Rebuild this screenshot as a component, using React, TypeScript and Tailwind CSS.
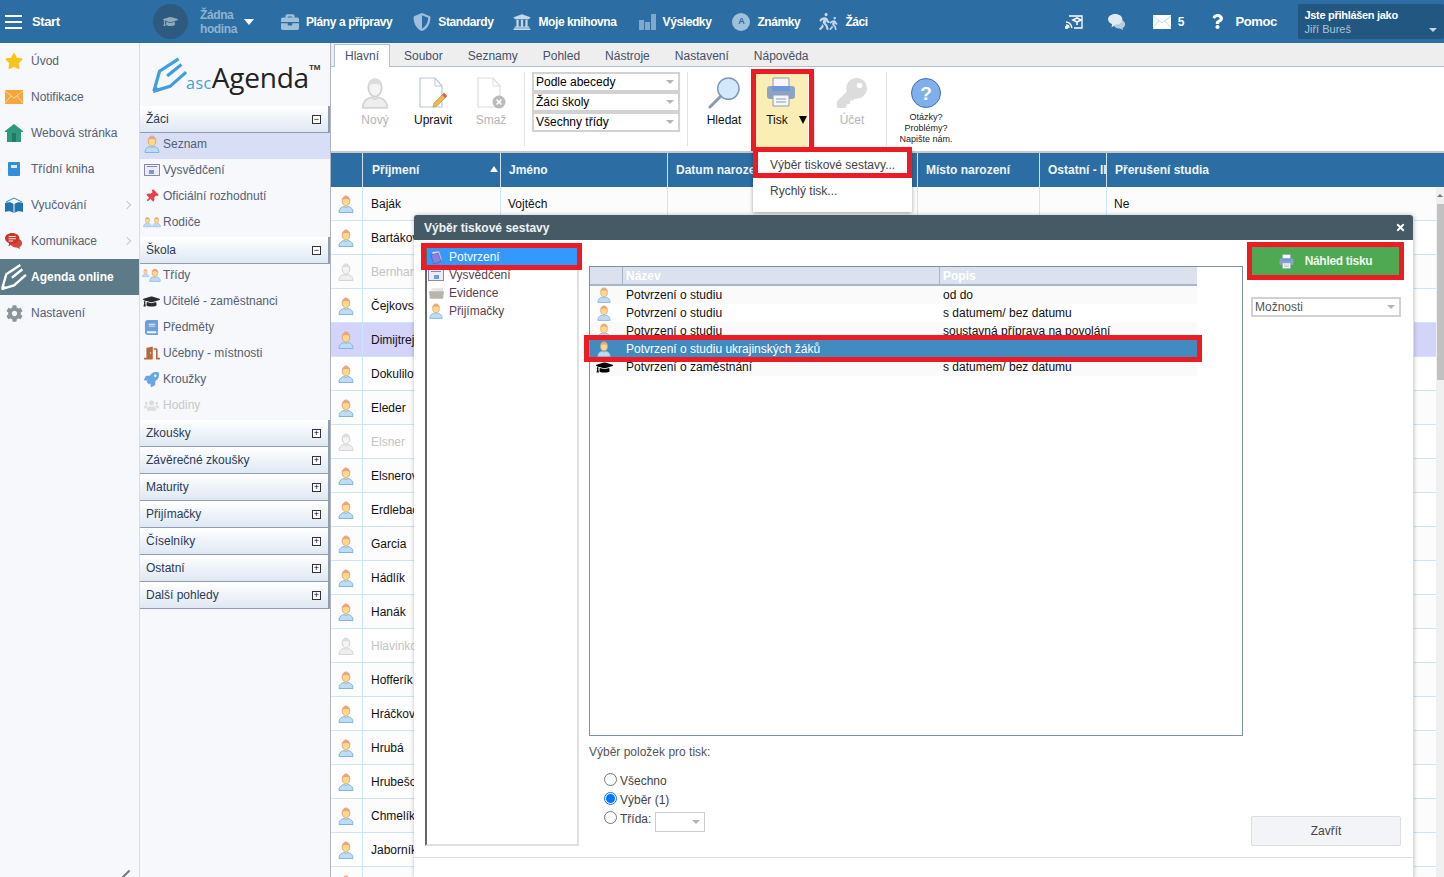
import type { ReactNode } from "react";
import {
  FaBook,
  FaBriefcase,
  FaCog,
  FaDoorOpen,
  FaGraduationCap,
  FaKey,
  FaQuestion,
  FaRocket,
  FaShieldAlt,
  FaStar,
  FaThumbtack,
  FaTimes,
  FaUniversity,
  FaUsers,
  FaWalking,
} from "react-icons/fa";

const RED = "absolute border-[5px] border-[#ed1c24] pointer-events-none";

const students: { name: string; muted?: boolean; selected?: boolean; first?: string; note?: string }[] = [
  { name: "Baják", first: "Vojtěch", note: "Ne" },
  { name: "Bartáková" },
  { name: "Bernhardová", muted: true },
  { name: "Čejkovská" },
  { name: "Dimijtrejev", selected: true },
  { name: "Dokulilová" },
  { name: "Eleder" },
  { name: "Elsner", muted: true },
  { name: "Elsnerová" },
  { name: "Erdlebachová" },
  { name: "Garcia" },
  { name: "Hádlík" },
  { name: "Hanák" },
  { name: "Hlavinková", muted: true },
  { name: "Hofferík" },
  { name: "Hráčková" },
  { name: "Hrubá" },
  { name: "Hrubešová" },
  { name: "Chmelík" },
  { name: "Jaborník" },
  { name: "" },
];

const reports = [
  { name: "Potvrzení o studiu", desc: "od do" },
  { name: "Potvrzení o studiu", desc: "s datumem/ bez datumu" },
  { name: "Potvrzení o studiu", desc: "soustavná příprava na povolání" },
  { name: "Potvrzení o studiu ukrajinských žáků", desc: "", selected: true },
  { name: "Potvrzení o zaměstnání", desc: "s datumem/ bez datumu", hat: true },
];

function Person({ muted = false, className = "h-[18px] w-[16px]" }: { muted?: boolean; className?: string }) {
  return (
    <svg viewBox="0 0 16 18" className={`shrink-0 ${className}`}>
      <path
        d="M1 17.500c0-4 2.500-5.500 5-6l2 1 2-1c2.500.5 5 2 5 6z"
        fill={muted ? "#eeeeee" : "#bfdcf5"}
        stroke={muted ? "#d5d5d5" : "#82b6e2"}
      />
      <ellipse
        cx="8"
        cy="6"
        rx="3.800"
        ry="5"
        fill={muted ? "#f4f4f4" : "#f9dc85"}
        stroke={muted ? "#d0d0d0" : "#e9a27c"}
      />
      <path d="M4.300 5c.5-3 2-4 3.700-4s3.200 1 3.700 4c-1.500-1.500-5.900-1.500-7.400 0z" fill={muted ? "#dddddd" : "#eda483"} />
    </svg>
  );
}

function Pencil({ className, color }: { className: string; color: string }) {
  return (
    <svg viewBox="0 0 40 40" className={className} fill="none" stroke={color} strokeWidth="3.400">
      <path d="M3 37 9 16 29 3" />
      <path d="M17 21 32 9" />
      <path d="M3 37l17-5 17-15" />
      <path d="M2 39l2-8 6 5z" fill={color} stroke="none" />
    </svg>
  );
}

function PrinterIcon({ className }: { className: string }) {
  return (
    <svg viewBox="0 0 30 30" className={className}>
      <path d="M7 1h16v9H7z" fill="#f4f6fa" stroke="#8d9cb5" />
      <rect x="1" y="9" width="28" height="13" rx="3" fill="#8ea3c4" />
      <path d="M6 9h18v5H6z" fill="#6f97dc" />
      <path d="M7 18h16v11H7z" fill="#f4f6fa" stroke="#8d9cb5" />
      <path d="M10 22h10M10 25h10" stroke="#8d9cb5" />
    </svg>
  );
}

function BubblesIcon({ back, front, lines }: { back: string; front: string; lines?: boolean }) {
  return (
    <svg viewBox="0 0 20 18" className="h-[18px] w-[18px]">
      <path d="M11 6c4 0 8 2 8 5.500 0 2-1 3.500-3 4.300l1 2-4-1.500c-4 0-7-2-7-5s2-5.300 5-5.300z" fill={back} />
      <path d="M8 0c4.500 0 8 2.500 8 6s-3.500 6-8 6l-4 3 .5-3.500C2 10.500 0 8.500 0 6c0-3.500 3.500-6 8-6z" fill={front} />
      {lines && <path d="M4 4h8M4 6.500h8M4 9h5" stroke="#ffffff" />}
    </svg>
  );
}

function MailIcon({ fill, line }: { fill: string; line: string }) {
  return (
    <svg viewBox="0 0 18 14" className="h-[14px] w-[18px]">
      <rect width="18" height="14" fill={fill} />
      <path d="M0 1l9 7 9-7M0 13l6-7M18 13l-6-7" fill="none" stroke={line} strokeWidth=".8" />
    </svg>
  );
}

function TopLink({ icon, label, className }: { icon: ReactNode; label: string; className: string }) {
  return (
    <div className={`flex items-center gap-[7px] whitespace-nowrap text-[12px] font-bold text-white ${className}`}>
      {icon}
      <span className="tracking-[-0.4px]">{label}</span>
    </div>
  );
}

function TopBar() {
  return (
    <header className="flex h-[43px] shrink-0 items-center bg-[#2c6ea3] shadow-[0_1px_3px_rgba(0,0,0,0.3)] [&>*]:shrink-0">
      <div className="ml-[5px] flex w-[17px] flex-col gap-[4px]">
        <span className="h-[2px] bg-white" />
        <span className="h-[2px] bg-white" />
        <span className="h-[2px] bg-white" />
      </div>
      <span className="ml-[10px] w-[28px] whitespace-nowrap text-[13px] font-bold tracking-[-0.4px] text-white">Start</span>
      <div className="ml-[93px] flex h-[35px] w-[35px] items-center justify-center rounded-full bg-[#2f5a80]">
        <FaGraduationCap className="text-[15px] text-[#8fa9bd]" />
      </div>
      <div className="ml-[12px] w-[36px] text-[12px] font-bold leading-[14px] tracking-[-0.4px] text-[#8fb2cf]">
        Žádna
        <br />
        hodina
      </div>
      <span className="ml-[8px] h-0 w-0 border-x-[5px] border-t-[6px] border-x-transparent border-t-white" />
      <TopLink className="ml-[27px]" label="Plány a přípravy" icon={<FaBriefcase className="text-[18px] text-[#9fc0da]" />} />
      <TopLink className="ml-[21px]" label="Standardy" icon={<FaShieldAlt className="text-[18px] text-[#9fc0da]" />} />
      <TopLink className="ml-[20px]" label="Moje knihovna" icon={<FaUniversity className="text-[18px] text-[#c5d8e8]" />} />
      <TopLink
        className="ml-[22px]"
        label="Výsledky"
        icon={
          <span className="flex h-[16px] items-end gap-[1px]">
            <span className="h-[10px] w-[5px] bg-[#7fa8c9]" />
            <span className="h-[8px] w-[5px] bg-[#7fa8c9]" />
            <span className="h-[16px] w-[5px] bg-[#7fa8c9]" />
          </span>
        }
      />
      <TopLink
        className="ml-[21px]"
        label="Známky"
        icon={
          <span className="flex h-[18px] w-[18px] items-center justify-center rounded-full bg-[#9fc0da] text-[9px] text-[#2c6ea3]">
            A
          </span>
        }
      />
      <TopLink
        className="ml-[19px]"
        label="Žáci"
        icon={
          <span className="flex w-[19px] text-[#c5d8e8]">
            <FaWalking className="-ml-[3px] shrink-0 text-[17px]" />
            <FaWalking className="-ml-[6px] mt-[4px] shrink-0 text-[13px]" />
          </span>
        }
      />
      <svg viewBox="0 0 18 14" className="ml-[197px] h-[14px] w-[18px]" fill="none" stroke="#ffffff" strokeWidth="1.300">
        <path d="M4 1h13v12H9" />
        <path d="M1 7c3 0 5 2 6 6M1 10c2 0 3 1 3 3" />
        <circle cx="1.500" cy="12.500" r="1" fill="#ffffff" />
        <path d="M8 5l4-2 4 2-4 2zM12 7v3" strokeWidth="1.600" />
      </svg>
      <span className="ml-[25px]">
        <BubblesIcon back="#b4cde1" front="#dfeaf3" />
      </span>
      <span className="ml-[27px]">
        <MailIcon fill="#ffffff" line="#b4cde1" />
      </span>
      <span className="ml-[7px] text-[12px] font-bold text-white">5</span>
      <FaQuestion className="ml-[26px] text-[15px] text-white" />
      <span className="ml-[10px] w-[41px] whitespace-nowrap text-[13px] font-bold tracking-[-0.4px] text-white">Pomoc</span>
      <div className="relative ml-[22px] h-[35px] w-[146px] rounded-[2px] bg-[#215780] px-[6px] pt-[4px] text-[11px] font-bold leading-[14px]">
        <div className="tracking-[-0.3px] text-white">Jste přihlášen jako</div>
        <div className="font-normal text-[#a9c5dc]">Jiří Bureš</div>
        <span className="absolute bottom-[7px] right-[7px] h-0 w-0 border-x-[4px] border-t-[4px] border-x-transparent border-t-[#c5d8e8]" />
      </div>
    </header>
  );
}

function SideLink({ icon, label, arrow, active }: { icon: ReactNode; label: string; arrow?: boolean; active?: boolean }) {
  return (
    <div
      className={`flex h-[36px] items-center text-[12px] ${
        active ? "bg-[#5c7a88] font-bold text-white" : "text-[#566072]"
      }`}
    >
      <span className="flex w-[31px] shrink-0 items-center justify-center pr-[3px]">{icon}</span>
      <span className="flex-1">{label}</span>
      {arrow && <span className="mr-[9px] h-[6px] w-[6px] rotate-45 border-r border-t border-[#c8c8c8]" />}
    </div>
  );
}

function Sidebar() {
  return (
    <aside className="relative w-[140px] shrink-0 border-r border-[#dcdcdc] bg-[#f6f8fb]">
      <SideLink label="Úvod" icon={<FaStar className="text-[18px] text-[#f6c51b]" />} />
      <SideLink label="Notifikace" icon={<MailIcon fill="#f5a63c" line="#fde5b5" />} />
      <SideLink
        label="Webová stránka"
        icon={
          <svg viewBox="0 0 18 18" className="h-[18px] w-[18px]">
            <path d="M9 0l9 7v1h-2v10H2V8H0V7z" fill="#2d9a80" />
            <rect x="7" y="9" width="4" height="9" fill="#1f7a66" />
          </svg>
        }
      />
      <SideLink
        label="Třídní kniha"
        icon={
          <span className="flex h-[14px] w-[12px] items-start justify-center rounded-[1px] bg-[#2f8fd8] pt-[3px]">
            <span className="h-[3px] w-[6px] bg-[#d6ebfb]" />
          </span>
        }
      />
      <SideLink
        label="Vyučování"
        arrow
        icon={
          <svg viewBox="0 0 18 16" className="h-[16px] w-[18px]">
            <path d="M1 5l8-4 8 4" fill="none" stroke="#2a86c8" />
            <path d="M0 6c3-1 6-1 8.500 1v9C6 14 3 14 0 15zM18 6c-3-1-6-1-8.500 1v9c2.500-2 5.500-2 8.500-1z" fill="#2473ad" />
          </svg>
        }
      />
      <SideLink label="Komunikace" arrow icon={<BubblesIcon back="#d8453a" front="#c8352a" lines />} />
      <SideLink label="Agenda online" active icon={<Pencil className="h-[28px] w-[28px]" color="#ffffff" />} />
      <SideLink label="Nastavení" icon={<FaCog className="text-[17px] text-[#8b9499]" />} />
      <span className="absolute bottom-[-2px] right-[12px] h-[10px] w-[2px] rotate-45 bg-[#777777]" />
    </aside>
  );
}

function PanelHeader({ label, open }: { label: string; open?: boolean }) {
  return (
    <div className="flex h-[27px] shrink-0 items-center justify-between border-b border-r-2 border-[#8e9db2] bg-gradient-to-b from-white to-[#dfe8f3] pl-[6px] pr-[7px] text-[12px] text-[#2b3a55]">
      <span>{label}</span>
      <span className="flex h-[9px] w-[9px] items-center justify-center border border-[#333333] bg-white text-[9px] leading-none text-black">
        {open ? "−" : "+"}
      </span>
    </div>
  );
}

function PanelItem({ icon, label, selected, muted }: { icon: ReactNode; label: string; selected?: boolean; muted?: boolean }) {
  return (
    <div
      className={`flex h-[26px] items-center gap-[3px] pb-[4px] pl-[3px] text-[12px] ${selected ? "bg-[#d7def5]" : ""} ${
        muted ? "text-[#c8c8c8]" : "text-[#566072]"
      }`}
    >
      <span className="flex w-[17px] items-center justify-center">{icon}</span>
      {label}
    </div>
  );
}

function Certificate() {
  return (
    <span className="flex h-[12px] w-[16px] flex-col items-center justify-between border border-[#8a86b8] bg-[#ecebf7]">
      <span className="mx-[2px] mt-[1px] h-[1px] w-[10px] bg-[#8a86b8]" />
      <span className="mb-[1px] h-[4px] w-[5px] bg-[#6d9fdc]" />
    </span>
  );
}

function Logo() {
  return (
    <div className="flex h-[63px] shrink-0 items-end pb-[14px] pl-[11px]">
      <Pencil className="mb-[-2px] h-[38px] w-[38px]" color="#3f9ee0" />
      <span className="ml-[-3px] mb-[1px] font-['Open_Sans',sans-serif] text-[16px] leading-none tracking-[0.5px] text-[#3f9ee0]">asc</span>
      <span className="font-['Open_Sans',sans-serif] text-[28px] leading-[30px] tracking-[-0.2px] text-[#222222]">Agenda</span>
      <span className="mb-[20px] text-[8px] font-bold leading-none text-[#333333]">TM</span>
    </div>
  );
}

function NavPanel() {
  return (
    <nav className="flex w-[191px] shrink-0 flex-col border-r border-[#aeb4bb] bg-[#f6f8fb]">
      <Logo />
      <PanelHeader label="Žáci" open />
      <PanelItem label="Seznam" selected icon={<Person />} />
      <PanelItem label="Vysvědčení" icon={<Certificate />} />
      <PanelItem label="Oficiální rozhodnutí" icon={<FaThumbtack className="rotate-45 text-[13px] text-[#e2434b]" />} />
      <PanelItem
        label="Rodiče"
        icon={
          <span className="flex">
            <Person className="h-[16px] w-[9px]" />
            <Person className="h-[16px] w-[9px]" />
          </span>
        }
      />
      <PanelHeader label="Škola" open />
      <PanelItem
        label="Třídy"
        icon={
          <span className="flex">
            <Person className="h-[14px] w-[7px]" />
            <Person className="h-[18px] w-[12px]" />
          </span>
        }
      />
      <PanelItem label="Učitelé - zaměstnanci" icon={<FaGraduationCap className="text-[17px] text-[#2b2b2b]" />} />
      <PanelItem label="Předměty" icon={<FaBook className="text-[15px] text-[#6d9fdc]" />} />
      <PanelItem label="Učebny - místnosti" icon={<FaDoorOpen className="text-[16px] text-[#b9673f]" />} />
      <PanelItem label="Kroužky" icon={<FaRocket className="text-[15px] text-[#6aa5e5]" />} />
      <PanelItem label="Hodiny" muted icon={<FaUsers className="text-[15px] text-[#dddddd]" />} />
      {["Zkoušky", "Závěrečné zkoušky", "Maturity", "Přijímačky", "Číselníky", "Ostatní", "Další pohledy"].map((item) => (
        <PanelHeader key={item} label={item} />
      ))}
    </nav>
  );
}

function ToolButton({ icon, label, muted, className = "" }: { icon: ReactNode; label: string; muted?: boolean; className?: string }) {
  return (
    <div className={`flex flex-col items-center pt-[9px] text-[12px] ${muted ? "text-[#b5b5b5]" : "text-[#111111]"} ${className}`}>
      <span className="flex h-[33px] items-center justify-center">{icon}</span>
      <span className="mt-[2px]">{label}</span>
    </div>
  );
}

function Select({ label, className }: { label: string; className: string }) {
  return (
    <div className={`flex items-center justify-between border-2 border-[#d2d2d2] bg-white pl-[2px] pr-[4px] text-[12px] ${className}`}>
      <span>{label}</span>
      <span className="h-0 w-0 border-x-[4px] border-t-[4px] border-x-transparent border-t-[#b5b5b5]" />
    </div>
  );
}

function Divider({ className }: { className: string }) {
  return <span className={`mt-[5px] h-[74px] w-px bg-[#e2e2e2] ${className}`} />;
}

function DocIcon({ pencil, muted }: { pencil?: boolean; muted?: boolean }) {
  return (
    <svg viewBox="0 0 30 32" className="h-[32px] w-[30px]">
      <path d="M2 1h15l7 8v21H2z" fill="#ffffff" stroke={muted ? "#dddddd" : "#b9c6d6"} strokeWidth="1.200" />
      <path d="M17 1v8h7" fill="none" stroke={muted ? "#dddddd" : "#b9c6d6"} />
      {pencil && (
        <>
          <path d="M26 16l3 3-10 10-4 1 1-4z" fill="#f2b84a" stroke="#a98a55" strokeWidth=".6" />
          <path d="M26 16l3 3-2 2-3-3z" fill="#e2604c" />
        </>
      )}
      {muted && (
        <>
          <circle cx="23" cy="25" r="6.500" fill="#bbbbbb" />
          <path d="M20.500 22.500l5 5M25.500 22.500l-5 5" stroke="#ffffff" strokeWidth="1.500" />
        </>
      )}
    </svg>
  );
}

function Ribbon() {
  return (
    <>
      <div className="flex h-[24px] shrink-0 items-end border-b border-[#b2bfd0] bg-[#eeeeee] pl-[3px] text-[12px] text-[#46506a]">
        <span className="mb-[-1px] flex h-[23px] w-[56px] items-center justify-center border border-b-0 border-[#b2bfd0] bg-white">Hlavní</span>
        <span className="ml-[14px] h-[19px]">Soubor</span>
        <span className="ml-[25px] h-[19px]">Seznamy</span>
        <span className="ml-[25px] h-[19px]">Pohled</span>
        <span className="ml-[25px] h-[19px]">Nástroje</span>
        <span className="ml-[25px] h-[19px]">Nastavení</span>
        <span className="ml-[25px] h-[19px]">Nápověda</span>
      </div>
      <div className="flex h-[86px] shrink-0 border-b-2 border-[#c9c9c9] bg-white">
        <ToolButton className="ml-[24px] w-[40px]" label="Nový" muted icon={<Person muted className="h-[32px] w-[28px]" />} />
        <ToolButton className="ml-[18px] w-[40px]" label="Upravit" icon={<DocIcon pencil />} />
        <ToolButton className="ml-[18px] w-[40px]" label="Smaž" muted icon={<DocIcon muted />} />
        <Divider className="ml-[13px]" />
        <div className="ml-[7px] mt-[5px] flex w-[148px] flex-col">
          <Select className="h-[20px]" label="Podle abecedy" />
          <Select className="h-[20px]" label="Žáci školy" />
          <Select className="h-[20px]" label="Všechny třídy" />
        </div>
        <Divider className="ml-[7px]" />
        <ToolButton
          className="ml-[16px] w-[40px]"
          label="Hledat"
          icon={
            <svg viewBox="0 0 34 34" className="h-[33px] w-[33px]">
              <circle cx="21" cy="13" r="11" fill="#d3e9fb" stroke="#7c98b2" strokeWidth="1.500" />
              <path d="M13 21 2 32" stroke="#8a9bae" strokeWidth="3" strokeLinecap="round" />
            </svg>
          }
        />
        <div className="relative ml-[9px] mt-[2px] flex h-[81px] w-[55px] flex-col items-center bg-[#fbeeb5] pt-[8px] text-[12px] text-[#111111]">
          <PrinterIcon className="h-[30px] w-[30px]" />
          <span className="mr-[9px] mt-[4px] pl-[2px]">Tisk</span>
          <span className="absolute bottom-[26px] right-[1px] h-0 w-0 border-x-[4px] border-t-[8px] border-x-transparent border-t-black" />
        </div>
        <Divider className="ml-[6px]" />
        <ToolButton className="ml-[17px] w-[40px]" label="Účet" muted icon={<FaKey className="h-[30px] w-[30px] text-[#dcdcdc]" />} />
        <Divider className="ml-[14px]" />
        <div className="ml-[9px] flex w-[60px] flex-col items-center pt-[11px] text-center text-[9px] leading-[11px] text-[#222222]">
          <span className="mb-[4px] flex h-[30px] w-[30px] items-center justify-center rounded-full border border-[#3d6fb5] bg-[#7fb0ec] text-[19px] font-bold text-white">?</span>
          Otázky?
          <br />
          Problémy?
          <br />
          Napište nám.
        </div>
      </div>
    </>
  );
}

const GRID = "grid grid-cols-[32px_138px_167px_250px_122px_67px_1fr]";

function StudentTable() {
  return (
    <div className="relative flex-1 overflow-hidden">
      <div className={`${GRID} h-[34px] items-center bg-[#2c6ea3] text-[12px] font-bold text-[#eef5fb]`}>
        <span className="h-full border-r border-[#cfe0ee]" />
        <span className="relative flex h-full items-center border-r border-[#cfe0ee] pl-[9px]">
          Příjmení
          <span className="absolute right-[2px] top-[13px] h-0 w-0 border-x-[4px] border-b-[6px] border-x-transparent border-b-white" />
        </span>
        <span className="flex h-full items-center border-r border-[#cfe0ee] pl-[8px]">Jméno</span>
        <span className="flex h-full items-center border-r border-[#cfe0ee] pl-[8px]">Datum narození</span>
        <span className="flex h-full items-center border-r border-[#cfe0ee] pl-[8px]">Místo narození</span>
        <span className="flex h-full items-center overflow-hidden whitespace-nowrap border-r border-[#cfe0ee] pl-[8px]">Ostatní - II</span>
        <span className="flex h-full items-center pl-[8px]">Přerušení studia</span>
      </div>
      <div className="mr-[8px]">
        {students.map((s, i) => (
          <div
            key={i}
            className={`${GRID} h-[34px] border-b border-[#cbe5fb] text-[12px] ${
              s.selected ? "bg-[#d4d4fa]" : i % 2 === 0 ? "bg-[#fcfcfc]" : "bg-white"
            } ${s.muted ? "text-[#c4c4c4]" : "text-[#111111]"}`}
          >
            <span className="flex items-center justify-center border-r border-[#cbe5fb] pr-[2px]">
              <Person muted={s.muted} />
            </span>
            <span className="flex items-center overflow-hidden whitespace-nowrap border-r border-[#cbe5fb] pl-[8px]">{s.name}</span>
            <span className="flex items-center border-r border-[#cbe5fb] pl-[7px]">{s.first}</span>
            <span className="border-r border-[#cbe5fb]" />
            <span className="border-r border-[#cbe5fb]" />
            <span className="border-r border-[#cbe5fb]" />
            <span className="flex items-center pl-[7px]">{s.note}</span>
          </div>
        ))}
      </div>
      <div className="absolute bottom-0 right-0 top-[34px] flex w-[8px] flex-col bg-[#f0f0f0]">
        <span className="mx-auto mt-[7px] h-0 w-0 border-x-[3px] border-b-[3px] border-x-transparent border-b-[#777777]" />
        <span className="ml-[1px] mt-[7px] h-[176px] w-[7px] bg-[#c1c1c1]" />
      </div>
    </div>
  );
}

function TreeItem({ icon, label, selected }: { icon: ReactNode; label: string; selected?: boolean }) {
  return (
    <div className={`flex h-[18px] items-center gap-[4px] text-[12px] ${selected ? "bg-[#3399ff] text-white" : "text-[#5a3f50]"}`}>
      <span className="flex w-[18px] justify-center">{icon}</span>
      {label}
    </div>
  );
}

function ReportGrid() {
  return (
    <div className="mt-[26px] h-[470px] border border-[#7f8fa6] bg-white">
      <div className="grid w-[607px] grid-cols-[33px_317px_1fr] border-b-2 border-[#a9b6c9] bg-[#dbe2ee] text-[12px] font-bold text-white">
        <span className="h-[17px] border-r border-[#a9b6c9]" />
        <span className="h-[17px] border-r border-[#a9b6c9] pl-[3px] leading-[18px]">Název</span>
        <span className="h-[17px] pl-[3px] leading-[18px]">Popis</span>
      </div>
      {reports.map((r, i) => (
        <div
          key={i}
          className={`grid h-[18px] w-[607px] grid-cols-[33px_317px_1fr] items-center text-[12px] ${
            r.selected ? "bg-[#428bc1] text-white" : i % 2 === 0 ? "bg-[#fafafa] text-[#111111]" : "bg-white text-[#111111]"
          }`}
        >
          <span className="flex justify-center pr-[5px]">
            {r.hat ? <FaGraduationCap className="text-[17px] text-black" /> : <Person className="h-[16px] w-[14px]" />}
          </span>
          <span className="pl-[3px]">{r.name}</span>
          <span className="pl-[3px]">{r.desc}</span>
        </div>
      ))}
    </div>
  );
}

function Radio({ label, checked }: { label: ReactNode; checked?: boolean }) {
  return (
    <div className="flex h-[19px] items-center gap-[3px] text-[12px] text-[#444444]">
      <span
        className={`mb-[2px] flex h-[13px] w-[13px] items-center justify-center rounded-full border ${
          checked ? "border-[#0075ff]" : "border-[#767676]"
        } bg-white`}
      >
        {checked && <span className="h-[9px] w-[9px] rounded-full bg-[#0075ff]" />}
      </span>
      {label}
    </div>
  );
}

function PrintDialog() {
  return (
    <div className="absolute left-[414px] top-[215px] flex h-[662px] w-[1000px] flex-col rounded-t-[3px] border-r border-[#dddddd] bg-white shadow-[0_0_4px_rgba(0,0,0,0.25)]">
      <div className="flex h-[25px] shrink-0 items-center justify-between rounded-t-[3px] bg-[#465a66] pl-[10px] pr-[7px] text-[12px] font-bold text-[#eef2f5]">
        Výběr tiskové sestavy
        <FaTimes className="text-[11px] text-white" />
      </div>
      <div className="flex h-[618px] border-b border-[#dddddd] pl-[11px]">
        <div className="mt-[3px] h-[603px] w-[154px] border-b-2 border-l-2 border-r-2 border-b-[#e0e0e0] border-l-[#666666] border-r-[#e0e0e0] pt-[5px]">
          <TreeItem
            label="Potvrzení"
            selected
            icon={
              <svg viewBox="0 0 16 16" className="h-[15px] w-[15px]">
                <path d="M3 2l8-1 3 10-8 3z" fill="#e8e8f5" stroke="#777799" strokeWidth=".6" />
                <path d="M2 5l8-2 3 9-8 3z" fill="#8b7fe0" stroke="#5a4fb0" strokeWidth=".6" />
              </svg>
            }
          />
          <TreeItem label="Vysvědčení" icon={<Certificate />} />
          <TreeItem
            label="Evidence"
            icon={
              <svg viewBox="0 0 16 12" className="h-[12px] w-[15px]">
                <path d="M1 3l3-2h11v3z" fill="#e3e3e3" />
                <path d="M0 4h16l-1 8H1z" fill="#b9b4ac" />
              </svg>
            }
          />
          <TreeItem label="Přijímačky" icon={<Person className="h-[16px] w-[14px]" />} />
        </div>
        <div className="ml-[10px] w-[654px]">
          <ReportGrid />
          <div className="mt-[7px] text-[12px] text-[#555555]">Výběr položek pro tisk:</div>
          <div className="ml-[15px] mt-[10px]">
            <Radio label="Všechno" />
            <Radio label="Výběr (1)" checked />
            <Radio
              label={
                <span className="flex items-center gap-[4px]">
                  Třída:
                  <span className="mt-[6px] flex h-[20px] w-[50px] items-center justify-end border border-[#cccccc] pr-[4px]">
                    <span className="h-0 w-0 border-x-[4px] border-t-[4px] border-x-transparent border-t-[#b5b5b5]" />
                  </span>
                </span>
              }
            />
          </div>
        </div>
        <div className="ml-[8px] flex w-[150px] flex-col">
          <div className="ml-[1px] mt-[7px] flex h-[28px] w-[147px] items-center justify-center gap-[11px] bg-[#4fa952] text-[12px] font-bold tracking-[-0.3px] text-[#eef7ee]">
            <PrinterIcon className="h-[15px] w-[15px]" />
            Náhled tisku
          </div>
          <Select className="mt-[22px] h-[20px] w-[150px] text-[#555555]" label="Možnosti" />
          <div className="mb-[11px] mt-auto flex h-[30px] items-center justify-center rounded-[2px] border border-[#dddddd] bg-[#f3f4f8] text-[12px] text-[#444444]">
            Zavřít
          </div>
        </div>
      </div>
    </div>
  );
}

function PrintMenu() {
  return (
    <div className="absolute left-[753px] top-[150px] flex h-[62px] w-[159px] flex-col bg-white pt-[2px] text-[12px] text-[#444444] shadow-[0_1px_4px_rgba(0,0,0,0.35)]">
      <div className="flex h-[26px] items-center pl-[17px]">Výběr tiskové sestavy...</div>
      <div className="flex h-[26px] items-center pl-[17px]">Rychlý tisk...</div>
    </div>
  );
}

export default function App() {
  return (
    <div className="relative flex h-screen flex-col overflow-hidden bg-white font-['Liberation_Sans',Arial,sans-serif] text-[12px]">
      <TopBar />
      <div className="flex min-h-0 flex-1">
        <Sidebar />
        <NavPanel />
        <main className="flex min-w-0 flex-1 flex-col">
          <Ribbon />
          <StudentTable />
        </main>
      </div>
      <PrintMenu />
      <PrintDialog />
      <div className={`${RED} left-[751px] top-[69px] h-[82px] w-[63px] border-b-0`} />
      <div className={`${RED} left-[753px] top-[147px] h-[31px] w-[159px]`} />
      <div className={`${RED} left-[421px] top-[243px] h-[27px] w-[161px]`} />
      <div className={`${RED} left-[584px] top-[335px] h-[27px] w-[618px]`} />
      <div className={`${RED} left-[1247px] top-[242px] h-[38px] w-[157px]`} />
    </div>
  );
}
